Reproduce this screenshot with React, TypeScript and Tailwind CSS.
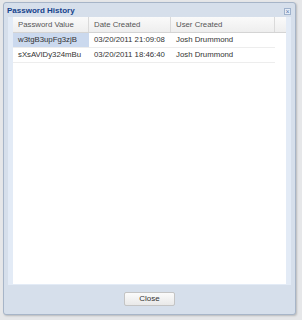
const rows = [
  { pw: "w3tgB3upFg3zjB", date: "03/20/2011 21:09:08", user: "Josh Drummond" },
  { pw: "sXsAVlDy324mBu", date: "03/20/2011 18:46:40", user: "Josh Drummond" },
];

export default function App() {
  return (
    <div className="w-[302px] h-[320px] bg-[#e6e7e9] pl-[3px] pt-[2px] pr-[6px] pb-[5px] font-['Liberation_Sans',Arial,sans-serif] text-[7.8px] whitespace-nowrap">
      <div className="relative flex flex-col h-full border border-[#a7b5c8] rounded-[3px] bg-[#d6dfeb] shadow-[1px_1px_2px_rgba(0,0,0,0.2)]">
        {/* title bar */}
        <div className="flex items-center h-[14px] pl-[3px] pr-[4px] shrink-0">
          <span className="font-bold text-[8px] text-[#15428b] leading-none mt-[1px]">Password History</span>
          <div className="ml-auto mt-[2px] w-[7px] h-[7px] border border-[#9fb2cc] bg-[#e6edf6] flex items-center justify-center text-[#5b7bb0] text-[7px] leading-none">
            ×
          </div>
        </div>

        {/* body */}
        <div className="flex-1 mx-[4px] px-[5px] pb-[1px] bg-[#e3ebf6] flex flex-col">
          <div className="flex-1 bg-white text-[#333]">
            <div className="flex h-[16px] bg-gradient-to-b from-[#fafafa] to-[#eeeeee] border-b border-[#d4d4d4] text-[#555]">
              <div className="w-[76px] pl-[5px] flex items-center border-r border-[#dadada]">Password Value</div>
              <div className="w-[82px] pl-[5px] flex items-center border-r border-[#dadada]">Date Created</div>
              <div className="w-[104px] pl-[5px] flex items-center border-r border-[#dadada]">User Created</div>
              <div className="flex-1" />
            </div>
            {rows.map((r, i) => (
              <div key={i} className="flex h-[15px] w-[262px] border-b border-[#ededed]">
                <div className={`w-[76px] pl-[5px] flex items-center ${i === 0 ? "bg-[#cbd9ee]" : ""}`}>{r.pw}</div>
                <div className="w-[82px] pl-[5px] flex items-center">{r.date}</div>
                <div className="w-[104px] pl-[5px] flex items-center">{r.user}</div>
              </div>
            ))}
          </div>
        </div>

        {/* footer */}
        <div className="h-[29px] shrink-0 flex items-center justify-center pb-[2px]">
          <button className="w-[51px] h-[14px] border border-[#c4c4c4] rounded-[2px] bg-gradient-to-b from-[#fbfbfb] to-[#e9e9e9] text-[#333] text-[8px] leading-none">
            Close
          </button>
        </div>
      </div>
    </div>
  );
}
